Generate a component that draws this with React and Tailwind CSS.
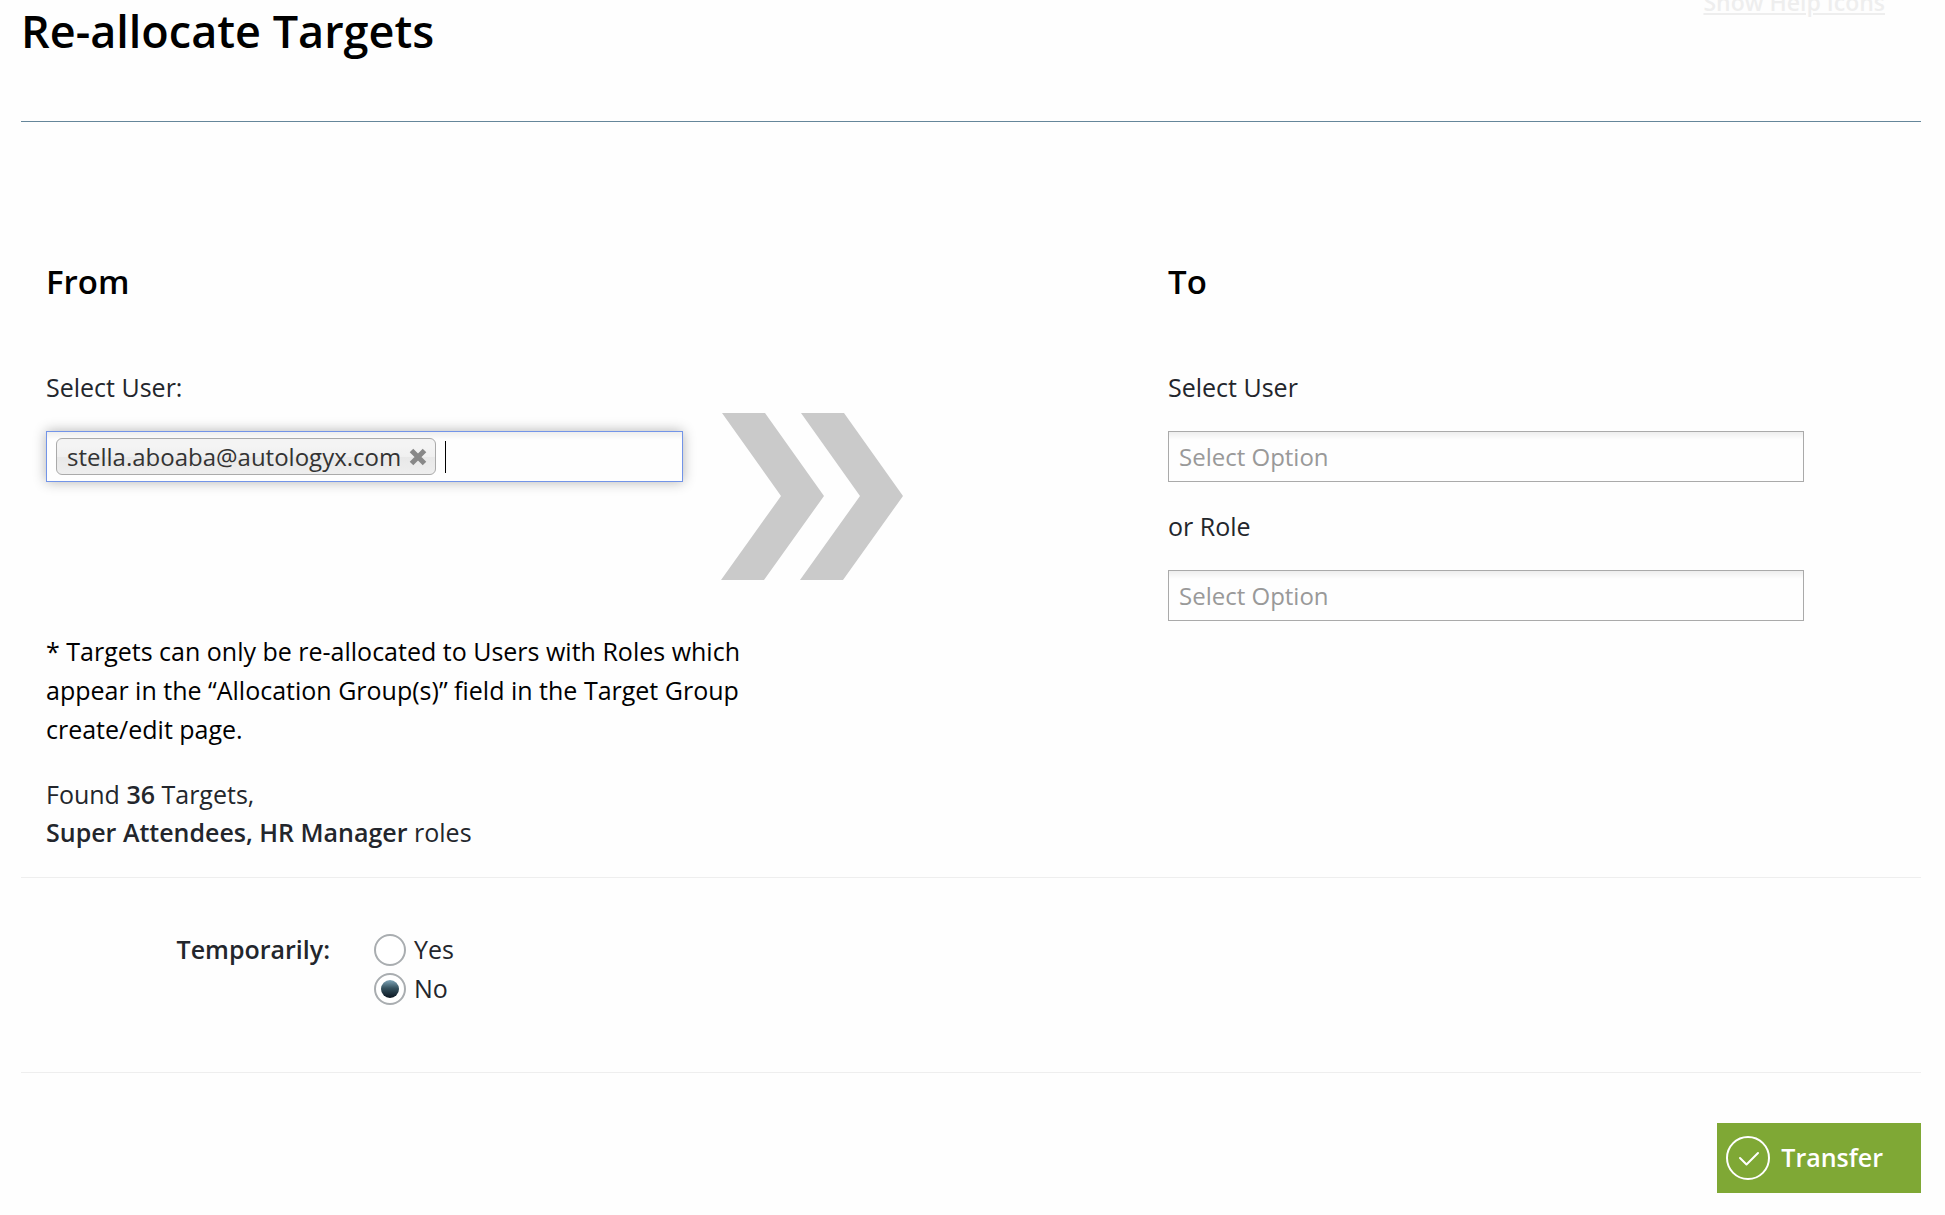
import { useState } from "react";

function DoubleChevron() {
  return (
    <svg viewBox="0 0 182 167" className="h-[167px] w-[182px] shrink-0" fill="#cacaca" aria-hidden="true">
      <path d="M1 0H44L103 83L43 167H0L60 83Z" />
      <path d="M80 0H123L182 83L122 167H79L139 83Z" />
    </svg>
  );
}

function OptionBox({ id, label }) {
  return (
    <div>
      <label htmlFor={id} className="block leading-[38px]">{label}</label>
      <input
        id={id}
        type="text"
        placeholder="Select Option"
        className="mt-[25px] block h-[51px] w-full border border-[#aaaaaa] bg-[#fefefe] bg-[linear-gradient(#eeeeee,#fefefe_8px)] px-2.5 text-2xl text-[#444444] outline-none placeholder:text-[#999999]"
      />
    </div>
  );
}

function Radio({ id, label, checked, onChange }) {
  return (
    <label htmlFor={id} className="flex h-[39px] items-center gap-2">
      <input
        id={id}
        type="radio"
        name="temporarily"
        checked={checked}
        onChange={onChange}
        className="grid size-8 appearance-none place-content-center rounded-full border-2 border-[#a9adb0] bg-white before:size-[18px] before:rounded-full checked:before:bg-[linear-gradient(#7fa5b8,#35525f_45%,#0a1520)]"
      />
      <span>{label}</span>
    </label>
  );
}

export default function App() {
  const [temporary, setTemporary] = useState("no");

  return (
    <main className="min-h-screen overflow-hidden bg-[#fefefe] pr-6 pb-5 pl-[21px] font-['Open_Sans',sans-serif] text-[25px] text-[#23262c]">
      <header className="flex h-[122px] items-start justify-between border-b border-[#65869a] pr-9">
        <h1 className="text-[45px] leading-[62px] font-semibold text-black">Re-allocate Targets</h1>
        <a href="#help" className="-mt-[15px] text-[23px] leading-[34px] font-semibold text-[#eeeeee] underline">
          Show Help Icons
        </a>
      </header>

      <div className="flex pt-[138px] pr-[5px] pb-[26px] pl-[25px]">
        <section className="w-[60%]">
          <h2 className="text-[33px] leading-[44px] font-semibold text-black">From</h2>
          <div className="mt-16 flex gap-[38px]">
            <div className="w-[637px]">
              <label htmlFor="from-user" className="block leading-[38px]">Select User:</label>
              <div className="mt-[25px] flex h-[51px] items-center border border-[#7294e8] bg-[linear-gradient(#eeeeee,#fefefe_8px)] pl-[9px] shadow-[0_0_12px_rgba(0,0,0,0.3)]">
                <span className="flex h-[37px] items-center gap-2 rounded-md border border-[#aaaaaa] bg-[linear-gradient(#f4f4f4_20%,#f0f0f0_50%,#e8e8e8_52%,#eeeeee)] pr-2 pl-2.5 text-2xl text-[#333333]">
                  stella.aboaba@autologyx.com
                  <button type="button" aria-label="Remove stella.aboaba@autologyx.com">
                    <svg viewBox="0 0 18 18" className="size-[18px]" stroke="#888888" strokeWidth="5" aria-hidden="true">
                      <path d="M2.500 2.500L15.500 15.500M15.500 2.500L2.500 15.500" />
                    </svg>
                  </button>
                </span>
                <span className="ml-[9px] h-8 w-px bg-black" />
                <input id="from-user" type="text" className="h-8 min-w-0 flex-1 bg-transparent outline-none" />
              </div>
            </div>
            <div className="pt-[45px]">
              <DoubleChevron />
            </div>
          </div>
          <p className="mt-[52px] max-w-[720px] leading-[39px] text-black">
            * Targets can only be re-allocated to Users with Roles which appear in the “Allocation Group(s)” field in
            the Target Group create/edit page.
          </p>
          <p className="mt-[26px] leading-[38px]">
            Found <strong className="font-semibold">36</strong> Targets,
            <br />
            <strong className="font-semibold">Super Attendees, HR Manager</strong> roles
          </p>
        </section>

        <section className="w-[34%]">
          <h2 className="text-[33px] leading-[44px] font-semibold text-black">To</h2>
          <div className="mt-16 flex flex-col gap-[25px]">
            <OptionBox id="to-user" label="Select User" />
            <OptionBox id="to-role" label="or Role" />
          </div>
        </section>
      </div>

      <div role="radiogroup" aria-labelledby="temporarily-label" className="flex gap-11 border-y border-[#eeeeee] pt-[52px] pb-16">
        <span id="temporarily-label" className="w-[309px] text-right leading-[39px] font-semibold">Temporarily:</span>
        <div>
          <Radio id="temp-yes" label="Yes" checked={temporary === "yes"} onChange={() => setTemporary("yes")} />
          <Radio id="temp-no" label="No" checked={temporary === "no"} onChange={() => setTemporary("no")} />
        </div>
      </div>

      <div className="flex justify-end pt-[50px]">
        <button type="button" className="flex h-[70px] items-center gap-[11px] bg-[#7fa835] pr-[38px] pl-[9px] font-semibold text-white">
          <svg viewBox="0 0 44 44" className="size-11" fill="none" stroke="currentColor" strokeWidth="2" strokeLinecap="round" strokeLinejoin="round" aria-hidden="true">
            <circle cx="22" cy="22" r="21" />
            <path d="M14 22L20.500 28.500L32 17" />
          </svg>
          Transfer
        </button>
      </div>
    </main>
  );
}
